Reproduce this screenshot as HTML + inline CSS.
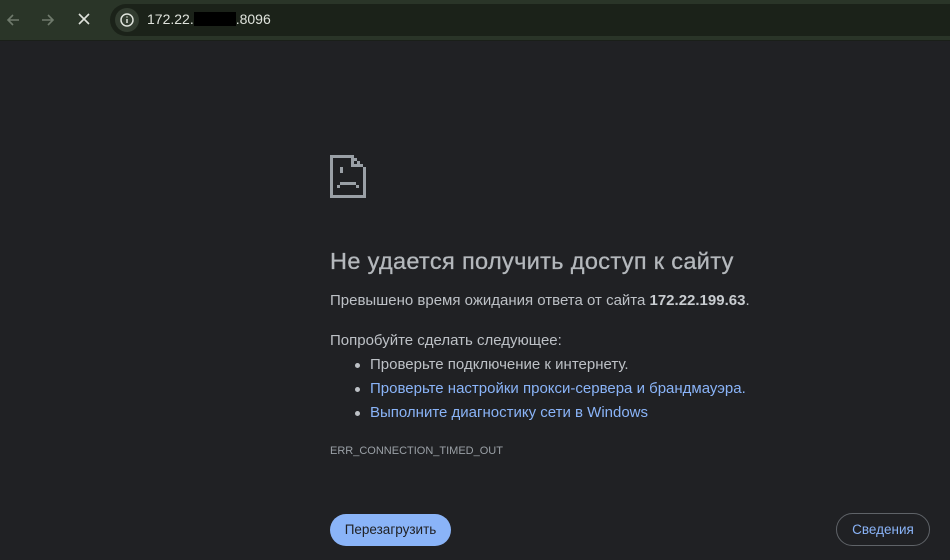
<!DOCTYPE html>
<html><head><meta charset="utf-8"><style>
body{margin:0;width:950px;height:560px;background:#202124;font-family:"Liberation Sans",sans-serif;overflow:hidden;position:relative;color:#9aa0a6}
.bar{position:absolute;left:0;top:0;width:950px;height:40px;background:#2a3528;border-bottom:1px solid #1a1f19}
.omni{position:absolute;left:110px;top:4px;width:860px;height:32px;border-radius:16px;background:#1b2219}
.ib{position:absolute;left:5px;top:4px;width:24px;height:24px;border-radius:12px;background:#323c30}
.url{position:absolute;left:37px;top:7px;font-size:14px;color:#dfe3dc}
.blk{display:inline-block;width:42px;height:14px;background:#000;vertical-align:-2px}
h1{position:absolute;left:330px;top:248px;margin:0;font-size:23.5px;font-weight:normal;color:#b4b8bc;letter-spacing:0.35px;-webkit-text-stroke:0.3px #b4b8bc}
.t{position:absolute;left:330px;font-size:15px;color:#bdc1c6}
.li{position:absolute;left:370px;font-size:15px}
.dot{position:absolute;left:355px;width:5px;height:5px;border-radius:3px;background:#bdc1c6}
.btn1{position:absolute;left:330px;top:514px;width:121px;height:32px;border-radius:16px;background:#8ab4f8;color:#202124;font-size:13.5px;text-align:center;line-height:32px}
.btn2{position:absolute;left:836px;top:513px;width:94px;height:33px;border-radius:17px;border:1px solid #5f6368;box-sizing:border-box;color:#8ab4f8;font-size:13.5px;text-align:center;line-height:31px}
</style></head><body>
<div class="bar">
<svg style="position:absolute;left:4px;top:11px" width="18" height="18" viewBox="0 0 18 18"><path d="M15 9H4M9 4L4 9l5 5" stroke="#6f7a6c" stroke-width="1.6" fill="none"/></svg>
<svg style="position:absolute;left:39px;top:11px" width="18" height="18" viewBox="0 0 18 18"><path d="M3 9h11M9 4l5 5-5 5" stroke="#6f7a6c" stroke-width="1.6" fill="none"/></svg>
<svg style="position:absolute;left:76px;top:11px" width="16" height="16" viewBox="0 0 16 16"><path d="M3 3l10 10M13 3L3 13" stroke="#dfe3dc" stroke-width="1.6"/></svg>
<div class="omni"><div class="ib"><svg width="24" height="24" viewBox="0 0 24 24"><circle cx="12" cy="12" r="6" stroke="#dfe3dc" stroke-width="1.5" fill="none"/><path d="M12 11v4M12 8.5v1" stroke="#dfe3dc" stroke-width="1.5"/></svg></div>
<div class="url">172.22.<span class="blk"></span>.8096</div></div>
</div>
<svg style="position:absolute;left:330px;top:155px" width="36" height="44" viewBox="0 0 36 44" shape-rendering="crispEdges" fill="#9aa0a6">
<rect x="0" y="0" width="24" height="3"/><rect x="0" y="0" width="3" height="43"/><rect x="0" y="40" width="36" height="3"/><rect x="33" y="12" width="3" height="31"/>
<rect x="21" y="0" width="3" height="3"/><rect x="24" y="3" width="3" height="3"/><rect x="27" y="6" width="3" height="3"/><rect x="30" y="9" width="3" height="3"/>
<rect x="21" y="3" width="3" height="9"/><rect x="21" y="9" width="12" height="3"/>
<rect x="10" y="12" width="3" height="6"/><rect x="10" y="27" width="16" height="3"/><rect x="7" y="30" width="3" height="3"/><rect x="26" y="30" width="3" height="3"/>
</svg>
<h1>Не удается получить доступ к сайту</h1>
<div class="t" style="top:292px">Превышено время ожидания ответа от сайта <b style="color:#c8ccd0">172.22.199.63</b>.</div>
<div class="t" style="top:332px">Попробуйте сделать следующее:</div>
<div class="dot" style="top:363px"></div><div class="li" style="top:356px;color:#bdc1c6">Проверьте подключение к интернету.</div>
<div class="dot" style="top:387px"></div><div class="li" style="top:380px;color:#8ab4f8">Проверьте настройки прокси-сервера и брандмауэра.</div>
<div class="dot" style="top:411px"></div><div class="li" style="top:404px;color:#8ab4f8">Выполните диагностику сети в Windows</div>
<div class="t" style="top:445px;font-size:11px;color:#9aa0a6">ERR_CONNECTION_TIMED_OUT</div>
<div class="btn1">Перезагрузить</div>
<div class="btn2">Сведения</div>
</body></html>
